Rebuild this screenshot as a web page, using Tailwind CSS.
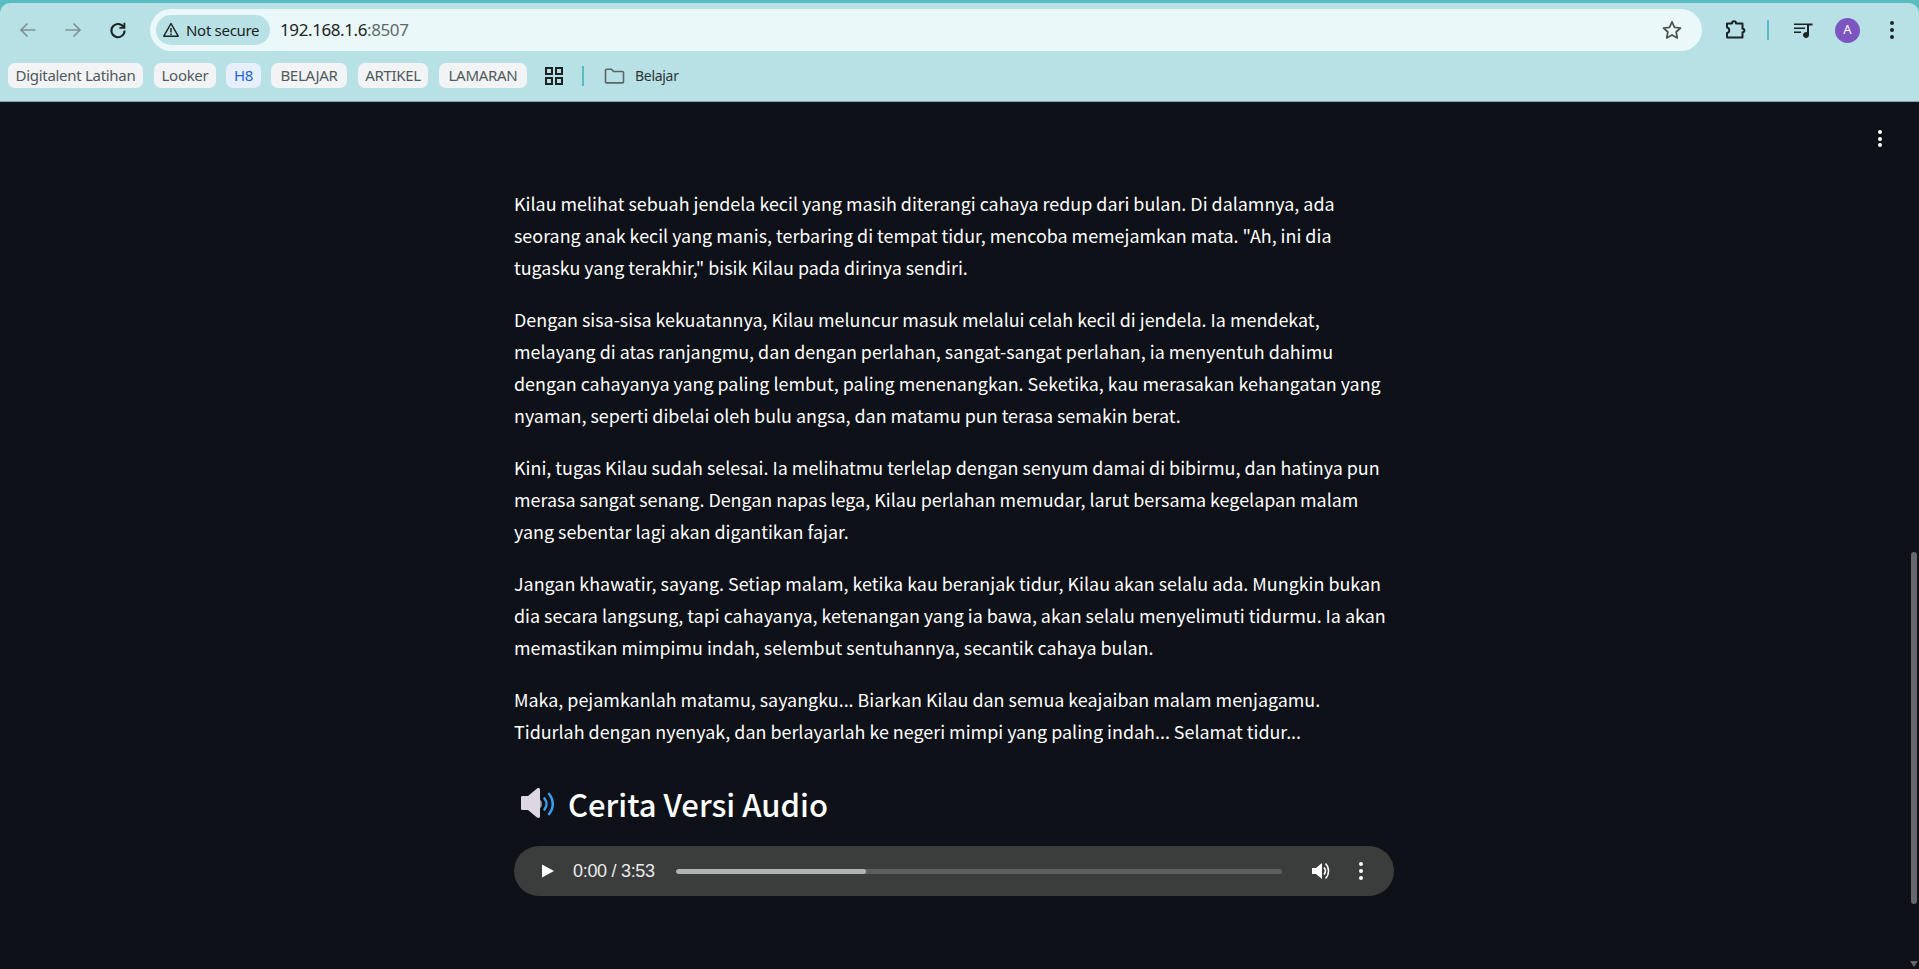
<!DOCTYPE html>
<html lang="id">
<head>
<meta charset="utf-8">
<title>Cerita Versi Audio</title>
<script src="https://cdn.jsdelivr.net/npm/@tailwindcss/browser@4"></script>
</head>
<body class="m-0 h-[969px] w-[1919px] overflow-hidden bg-[#0e1117]">
<div class="flex h-[969px] flex-col">
  <!-- Browser chrome -->
  <header class="h-[102px] shrink-0 bg-[#59bcc3] font-['Noto_Sans',sans-serif]">
    <div class="h-[3px]"></div>
    <div class="flex h-[98px] flex-col rounded-t-[10px] bg-[#b8e1e5]">
      <div class="flex h-[48px] shrink-0 items-center pt-[6px]">
        <div class="flex w-[150px] shrink-0 items-center pl-[18px]">
          <svg class="h-[20px] w-[20px]" viewBox="0 0 20 20" fill="none" stroke="#7f9396" stroke-width="1.7"><path d="M17.5 10H3M9.5 3.5 3 10l6.5 6.5"/></svg>
          <svg class="ml-[25px] h-[20px] w-[20px]" viewBox="0 0 20 20" fill="none" stroke="#7f9396" stroke-width="1.7"><path d="M2.5 10H17M10.500 3.500 17 10l-6.500 6.500"/></svg>
          <svg class="ml-[25px] h-[20px] w-[20px]" viewBox="0 0 20 20" fill="none" stroke="#1d2324" stroke-width="2"><path d="M15.800 7.400A6.600 6.600 0 1 0 16.600 10.500"/><path d="M16.400 2.800v5h-5" stroke-width="1.800"/></svg>
        </div>
        <div class="flex h-[42px] w-[1552px] shrink-0 items-center rounded-full bg-[#eaf8f9] pl-[6px]">
          <div class="flex h-[30px] w-[114px] items-center rounded-full bg-[#b8e1e5] pl-[6px]">
            <svg class="h-[18px] w-[18px] shrink-0" viewBox="0 0 18 18" fill="none" stroke="#1d2324" stroke-width="1.500"><path d="M9 2.500 16.200 15.200H1.800Z" stroke-linejoin="round"/><path d="M9 7v4.500M9 12.500v1.500"/></svg>
            <span class="ml-[6px] text-[15px] leading-none tracking-[-0.3px] whitespace-nowrap text-[#1d2324]">Not secure</span>
          </div>
          <span class="ml-[10px] text-[17px] tracking-[-0.4px] text-[#1d2324]">192.168.1.6<span class="text-[#5e6b6d]">:8507</span></span>
          <svg class="mr-[19px] ml-auto h-[22px] w-[22px]" viewBox="0 0 22 22" fill="none" stroke="#4a5153" stroke-width="1.700"><path d="m11 2.800 2.500 5.500 6 .700-4.400 4 1.200 5.900-5.300-3-5.300 3 1.200-5.900-4.400-4 6-.700Z" stroke-linejoin="round"/></svg>
        </div>
        <div class="flex flex-1 items-center">
          <svg class="ml-[22px] h-[22px] w-[22px]" viewBox="0 0 22 22" fill="none" stroke="#1d2324" stroke-width="2" stroke-linejoin="round"><path d="M3 4.500h5c0-3 4-3 4 0h6.500v5.300c2.500 0 2.500 3.400 0 3.400v5.300H3.500c-.500 0-.500 0-.500-.500v-4c3-.500 3-5 0-5.500Z"/></svg>
          <div class="ml-[21px] h-[20px] w-[2px] bg-[#59bcc3]"></div>
          <svg class="ml-[24px] h-[20px] w-[20px]" viewBox="0 0 20 20" fill="#1d2324"><path d="M1 3.500h13v1.600H1zM1 7.500h11v1.600H1zM1 11.500h7v1.600H1z"/><path d="M14 3.500h5.500v2h-3.500v9.500a3 3 0 1 1-2-2.800z"/></svg>
          <div class="ml-[22px] flex h-[25px] w-[25px] items-center justify-center rounded-full bg-[#7d55c0] text-[13px] text-white">A</div>
          <div class="ml-[30px] flex flex-col gap-[3px]">
            <div class="h-[4px] w-[4px] rounded-full bg-[#1d2324]"></div>
            <div class="h-[4px] w-[4px] rounded-full bg-[#1d2324]"></div>
            <div class="h-[4px] w-[4px] rounded-full bg-[#1d2324]"></div>
          </div>
        </div>
      </div>
      <div class="flex h-[50px] items-center pb-[1px] pl-[8px] text-[15px] tracking-[-0.3px] text-[#505a5c]">
        <span class="flex h-[25px] w-[135px] items-center justify-center rounded-[7px] bg-[#f1f3f5] whitespace-nowrap">Digitalent Latihan</span>
        <span class="ml-[11px] flex h-[25px] w-[62px] items-center justify-center rounded-[7px] bg-[#f1f3f5]">Looker</span>
        <span class="ml-[10px] flex h-[25px] w-[35px] items-center justify-center rounded-[7px] bg-[#e6effc] text-[#1b66d2]">H8</span>
        <span class="ml-[10px] flex h-[25px] w-[76px] items-center justify-center rounded-[7px] bg-[#f1f3f5]">BELAJAR</span>
        <span class="ml-[11px] flex h-[25px] w-[70px] items-center justify-center rounded-[7px] bg-[#f1f3f5]">ARTIKEL</span>
        <span class="ml-[11px] flex h-[25px] w-[88px] items-center justify-center rounded-[7px] bg-[#f1f3f5]">LAMARAN</span>
        <svg class="ml-[17px] h-[20px] w-[20px]" viewBox="0 0 20 20" fill="none" stroke="#1d2324" stroke-width="2"><rect x="2" y="2" width="6" height="6"/><rect x="12" y="2" width="6" height="6"/><rect x="2" y="12" width="6" height="6"/><rect x="12" y="12" width="6" height="6"/></svg>
        <div class="ml-[18px] h-[20px] w-[2px] bg-[#59bcc3]"></div>
        <svg class="ml-[20px] h-[20px] w-[21px]" viewBox="0 0 21 20" fill="none" stroke="#5c6566" stroke-width="1.600"><path d="M1.500 4.500c0-.800.500-1.200 1.200-1.200h4.800l2 2.200h8.800c.800 0 1.200.500 1.200 1.200v9c0 .800-.500 1.200-1.200 1.200H2.700c-.700 0-1.200-.500-1.200-1.200Z"/></svg>
        <span class="ml-[10px] text-[14px] text-[#2b3334]">Belajar</span>
      </div>
    </div>
    <div class="h-px bg-[#7fa6aa]"></div>
  </header>

  <!-- Page -->
  <div class="relative flex min-h-0 flex-1">
    <main class="w-[1908px] shrink-0 pt-[85px] pl-[514px] font-['Noto_Sans_CJK_JP','Noto_Sans',sans-serif] text-[17.900px] leading-[32px] text-white">
      <div class="w-[880px]">
        <p class="mb-[20px] whitespace-nowrap">Kilau melihat sebuah jendela kecil yang masih diterangi cahaya redup dari bulan. Di dalamnya, ada<br>seorang anak kecil yang manis, terbaring di tempat tidur, mencoba memejamkan mata. "Ah, ini dia<br>tugasku yang terakhir," bisik Kilau pada dirinya sendiri.</p>
        <p class="mb-[20px] whitespace-nowrap">Dengan sisa-sisa kekuatannya, Kilau meluncur masuk melalui celah kecil di jendela. Ia mendekat,<br>melayang di atas ranjangmu, dan dengan perlahan, sangat-sangat perlahan, ia menyentuh dahimu<br>dengan cahayanya yang paling lembut, paling menenangkan. Seketika, kau merasakan kehangatan yang<br>nyaman, seperti dibelai oleh bulu angsa, dan matamu pun terasa semakin berat.</p>
        <p class="mb-[20px] whitespace-nowrap">Kini, tugas Kilau sudah selesai. Ia melihatmu terlelap dengan senyum damai di bibirmu, dan hatinya pun<br>merasa sangat senang. Dengan napas lega, Kilau perlahan memudar, larut bersama kegelapan malam<br>yang sebentar lagi akan digantikan fajar.</p>
        <p class="mb-[20px] whitespace-nowrap">Jangan khawatir, sayang. Setiap malam, ketika kau beranjak tidur, Kilau akan selalu ada. Mungkin bukan<br>dia secara langsung, tapi cahayanya, ketenangan yang ia bawa, akan selalu menyelimuti tidurmu. Ia akan<br>memastikan mimpimu indah, selembut sentuhannya, secantik cahaya bulan.</p>
        <p class="whitespace-nowrap">Maka, pejamkanlah matamu, sayangku... Biarkan Kilau dan semua keajaiban malam menjagamu.<br>Tidurlah dengan nyenyak, dan berlayarlah ke negeri mimpi yang paling indah... Selamat tidur...</p>
        <h3 class="mt-[34px] flex h-[46px] items-center text-[31px] leading-[46px] font-medium">
          <svg class="ml-[6px] h-[36px] w-[36px] shrink-0" viewBox="0 0 36 36" fill="none"><path d="M1 11.500c0-1 .500-1.500 1.500-1.500H8l9-7.500c1.500-1 3-.500 3 1.500v26c0 2-1.500 2.500-3 1.500l-9-7.500H2.500c-1 0-1.500-.500-1.500-1.500Z" fill="#dcd7e2"/><path d="M20 14c2.500 .800 2.500 7.200 0 8Z" fill="#a39eae"/><path d="M24.500 12.500c2.600 3.200 2.600 7.800 0 11M29 8c5 5.800 5 14.200 0 20" stroke="#3b9bef" stroke-width="2.600" stroke-linecap="round"/></svg>
          <span class="ml-[12px]">Cerita Versi Audio</span>
        </h3>
        <div class="mt-[19px] flex h-[50px] w-[880px] items-center rounded-full bg-[#3b3d3c] font-['Liberation_Sans',sans-serif] text-[18px] text-[#ebebeb]">
          <svg class="ml-[27px] h-[16px] w-[14px] shrink-0" viewBox="0 0 14 16" fill="#fff"><path d="M1 1.500 13 8 1 14.500Z"/></svg>
          <span class="ml-[18px] tracking-[-0.300px] whitespace-nowrap">0:00 / 3:53</span>
          <div class="ml-[21px] h-[5px] w-[606px] shrink-0 overflow-hidden rounded-full bg-[#5d5f5e]">
            <div class="h-full w-[190px] rounded-full bg-[#b1b2b1]"></div>
          </div>
          <svg class="ml-[29px] h-[22px] w-[20px] shrink-0" viewBox="0 0 20 22" fill="none"><path d="M1 8h4l6-5v16l-6-5H1Z" fill="#fff"/><path d="M13 7.500c1.800 2 1.800 5 0 7" stroke="#fff" stroke-width="1.800"/><path d="M14.500 3.500c4 4 4 11 0 15" stroke="#fff" stroke-width="1.500"/></svg>
          <div class="ml-[28px] flex flex-col gap-[3px]">
            <div class="h-[4px] w-[4px] rounded-full bg-white"></div>
            <div class="h-[4px] w-[4px] rounded-full bg-white"></div>
            <div class="h-[4px] w-[4px] rounded-full bg-white"></div>
          </div>
        </div>
      </div>
    </main>
    <!-- Streamlit page menu -->
    <div class="absolute top-[28px] left-[1878px] flex flex-col gap-[2.500px]">
      <div class="h-[4px] w-[4px] rounded-full bg-white"></div>
      <div class="h-[4px] w-[4px] rounded-full bg-white"></div>
      <div class="h-[4px] w-[4px] rounded-full bg-white"></div>
    </div>
    <!-- Scrollbar -->
    <div class="flex w-[11px] shrink-0 flex-col items-center">
      <div class="mt-[450px] h-[352px] w-[6px] rounded-full bg-[#66686c]"></div>
      <svg class="mt-auto mb-[2px] h-[6px] w-[8px]" viewBox="0 0 8 6" fill="#66686c"><path d="M0 0h8L4 6Z"/></svg>
    </div>
  </div>
</div>
</body>
</html>
